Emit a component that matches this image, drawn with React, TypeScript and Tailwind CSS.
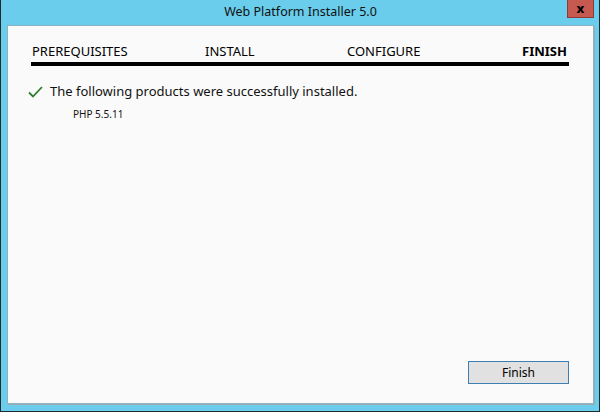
export default function App() {
  const steps = [
    { label: "PREREQUISITES", width: "w-[173px]", active: false },
    { label: "INSTALL", width: "w-[142px]", active: false },
    { label: "CONFIGURE", width: "w-[175px]", active: false },
    { label: "FINISH", width: "", active: true },
  ];

  return (
    <div
      className="flex h-[412px] w-[600px] flex-col border-x border-b border-x-[#1c2b30] border-b-[#1c2b30] bg-[#6acdeb] pb-[7px] pl-[6px] pr-[5px] text-[#000]"
      style={{ fontFamily: '"Noto Sans", "Open Sans", sans-serif' }}
    >
      {/* title bar */}
      <div className="relative flex h-[25px] shrink-0 items-center justify-center">
        <span className="text-[12.5px] leading-none text-[#111]">Web Platform Installer 5.0</span>
        <div className="absolute right-[0px] top-0 flex h-[18px] w-[27px] items-center justify-center border border-t-0 border-[#8f3a3a] bg-[#c75a50]">
          <span className="text-[13px] font-extrabold leading-none text-black">x</span>
        </div>
      </div>

      {/* client area */}
      <div className="flex flex-1 flex-col border border-[#8fb2c2] bg-[#fafafa] shadow-[1px_1px_0_#9aaab0]">
        <div className="ml-[23px] mt-[19px] w-[538px]">
          <div className="flex pl-[1px] text-[13px] leading-none">
            {steps.map((s) => (
              <div key={s.label} className={`${s.width} ${s.active ? "font-bold" : ""}`}>
                {s.label}
              </div>
            ))}
          </div>
          <div className="mt-[4px] h-[4px] w-full bg-black" />
        </div>

        <div className="ml-[20px] mt-[19px] flex items-center gap-[7px]">
          <svg width="15" height="12" viewBox="0 0 15 12">
            <path d="M1 6.5 L5 10.5 L14 1" fill="none" stroke="#2f7d2f" strokeWidth="1.8" />
          </svg>
          <span className="text-[13px] leading-none text-[#111]">
            The following products were successfully installed.
          </span>
        </div>
        <div className="ml-[65px] mt-[11px] text-[10px] leading-none text-[#111]">PHP 5.5.11</div>

        <div className="mt-auto mb-[19px] mr-[24px] flex justify-end">
          <button className="h-[23px] w-[101px] border border-[#3c7fb1] bg-[#e1e1e1] text-[12px] leading-none text-black">
            Finish
          </button>
        </div>
      </div>
    </div>
  );
}
